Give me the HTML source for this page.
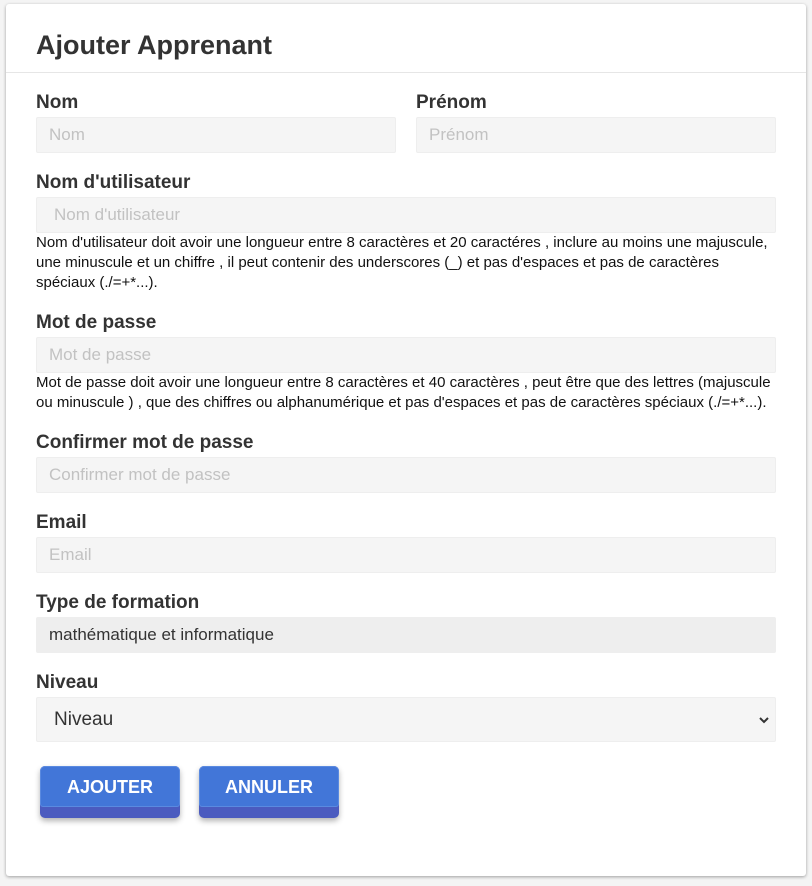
<!DOCTYPE html>
<html><head><meta charset="utf-8"><style>
body{margin:0;background:#f4f4f4;font-family:"Liberation Sans",Arial,sans-serif;width:812px;height:886px;position:relative;overflow:hidden}
.card{position:absolute;left:6px;top:4px;width:800px;height:872px;background:#fff;border-radius:3px;box-shadow:0 1px 3px rgba(0,0,0,.35)}
.hr{position:absolute;left:6px;top:72px;width:800px;height:1px;background:#e6e6e6}
.a{position:absolute}
h1{position:absolute;left:36px;top:30px;margin:0;font-size:27px;font-weight:bold;color:#333}
.l{position:absolute;font-size:19px;font-weight:bold;color:#333}
.i{position:absolute;height:34px;background:#f5f5f5;border:1px solid #eee;border-radius:2px;font-size:17px;color:#c2c2c2;line-height:34px;box-sizing:content-box}
.h{position:absolute;left:36px;width:760px;font-size:15px;line-height:20px;color:#111;white-space:nowrap}
.b{position:absolute;top:766px;width:140px;height:52px;background:#4b5bbf;border-radius:5px;box-shadow:0 3px 6px rgba(0,0,0,.3)}
.b div{height:41px;background:#4276d8;border-radius:5px 5px 3px 3px;border:1px solid #5a8ae0;box-sizing:border-box;color:#fff;font-weight:bold;font-size:18px;text-align:center;line-height:41px}
</style></head><body>
<div class="card"></div><div class="hr"></div>
<h1>Ajouter Apprenant</h1>
<div class="l" style="left:36px;top:92px">Nom</div>
<div class="l" style="left:416px;top:92px">Prénom</div>
<div class="i" style="left:36px;top:117px;width:346px;padding-left:12px">Nom</div>
<div class="i" style="left:416px;top:117px;width:346px;padding-left:12px">Prénom</div>
<div class="l" style="left:36px;top:172px">Nom d'utilisateur</div>
<div class="i" style="left:36px;top:197px;width:721px;padding-left:17px">Nom d'utilisateur</div>
<div class="h" style="top:233px">Nom d'utilisateur doit avoir une longueur entre 8 caractères et 20 caractéres , inclure au moins une majuscule,<br>une minuscule et un chiffre , il peut contenir des underscores (_) et pas d'espaces et pas de caractères<br>spéciaux (./=+*...).</div>
<div class="l" style="left:36px;top:312px">Mot de passe</div>
<div class="i" style="left:36px;top:337px;width:726px;padding-left:12px">Mot de passe</div>
<div class="h" style="top:373px">Mot de passe doit avoir une longueur entre 8 caractères et 40 caractères , peut être que des lettres (majuscule<br>ou minuscule ) , que des chiffres ou alphanumérique et pas d'espaces et pas de caractères spéciaux (./=+*...).</div>
<div class="l" style="left:36px;top:432px">Confirmer mot de passe</div>
<div class="i" style="left:36px;top:457px;width:726px;padding-left:12px">Confirmer mot de passe</div>
<div class="l" style="left:36px;top:512px">Email</div>
<div class="i" style="left:36px;top:537px;width:726px;padding-left:12px">Email</div>
<div class="l" style="left:36px;top:592px">Type de formation</div>
<div class="i" style="left:36px;top:617px;width:726px;padding-left:12px;background:#eee;color:#333">mathématique et informatique</div>
<div class="l" style="left:36px;top:672px">Niveau</div>
<div class="i" style="left:36px;top:697px;width:721px;height:43px;line-height:43px;padding-left:17px;color:#333;font-size:19px">Niveau<svg class="a" style="right:6px;top:18px" width="10" height="8" viewBox="0 0 10 8"><path d="M1 2l4 4 4-4" stroke="#333" stroke-width="2" fill="none"/></svg></div>
<div class="b" style="left:40px"><div>AJOUTER</div></div>
<div class="b" style="left:199px"><div>ANNULER</div></div>
</body></html>
